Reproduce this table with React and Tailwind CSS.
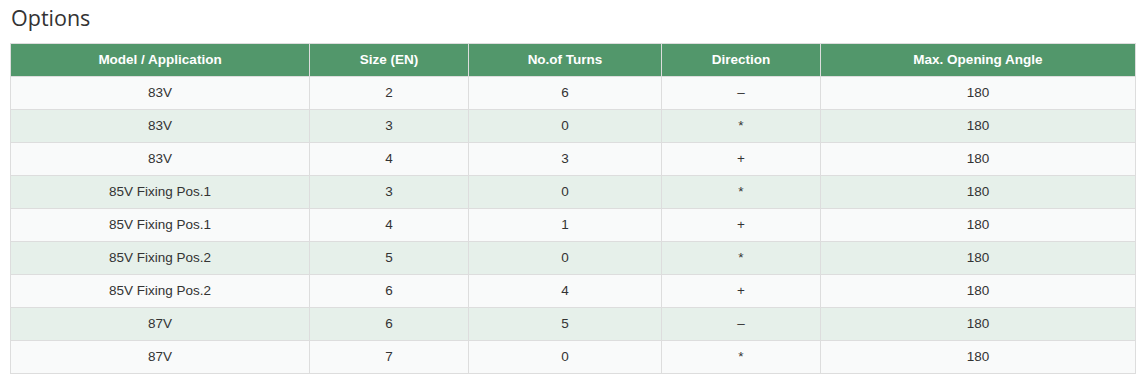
const rows = [
  ['83V', '2', '6', '–', '180'],
  ['83V', '3', '0', '*', '180'],
  ['83V', '4', '3', '+', '180'],
  ['85V Fixing Pos.1', '3', '0', '*', '180'],
  ['85V Fixing Pos.1', '4', '1', '+', '180'],
  ['85V Fixing Pos.2', '5', '0', '*', '180'],
  ['85V Fixing Pos.2', '6', '4', '+', '180'],
  ['87V', '6', '5', '–', '180'],
  ['87V', '7', '0', '*', '180'],
];

const headers = [
  ['Model / Application', 'w-[299px]'],
  ['Size (EN)', 'w-[159px]'],
  ['No.of Turns', 'w-[193px]'],
  ['Direction', 'w-[159px]'],
  ['Max. Opening Angle', 'w-[315px]'],
];

const App = () => {
  return (
    <div className="bg-white min-h-[391px] px-[10px] pt-[5px] font-['Liberation_Sans',Arial,sans-serif] text-[#333]">
      <h2 className="font-['Open_Sans',sans-serif] text-[21.5px] leading-[26px] pl-[1px] text-[#333] mb-[12px]">Options</h2>
      <table className="table-fixed border-collapse w-[1125px] text-[13.5px] text-center">
        <thead>
          <tr className="bg-[#52976b] text-white">
            {headers.map(([h, w]) => (
              <th key={h} className={`${w} h-[33px] border border-[#dddddd] font-bold p-0`}>{h}</th>
            ))}
          </tr>
        </thead>
        <tbody>
          {rows.map((r, i) => (
            <tr key={i} className={i % 2 === 0 ? 'bg-[#f9fafa]' : 'bg-[#e6f0ea]'}>
              {r.map((c, j) => (
                <td key={j} className="h-[33px] border border-[#dddddd] p-0">{c}</td>
              ))}
            </tr>
          ))}
        </tbody>
      </table>
    </div>
  );
};

export default App;
